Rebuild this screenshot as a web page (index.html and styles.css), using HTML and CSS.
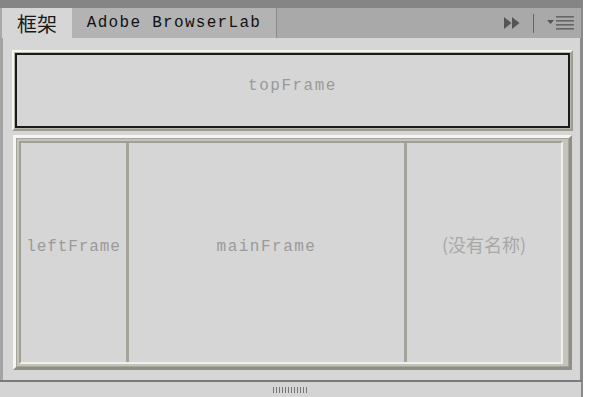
FILE: index.html
```html
<!DOCTYPE html>
<html lang="zh-CN">
  <head>
    <meta charset="UTF-8" />
    <title>框架</title>
    <link rel="stylesheet" href="styles.css">
  </head>
  <body>
    <div class="panel">
      <div class="top-strip"></div>
      <div class="tab-bar">
        <div class="tab active">框架</div>
        <div class="tab">Adobe BrowserLab</div>
        <div class="tab-tools">
          <svg class="icon" width="18" height="14" viewBox="0 0 18 14">
            <polygon points="1,1 8.5,7 1,13" fill="#555" />
            <polygon points="9,1 16.5,7 9,13" fill="#555" />
          </svg>
          <span class="tool-sep"></span>
          <svg class="icon" width="30" height="16" viewBox="0 0 30 16">
            <polygon points="1,5 8,5 4.5,9" fill="#555" />
            <rect x="10" y="1" width="18" height="1.6" fill="#666" />
            <rect x="10" y="5" width="18" height="1.6" fill="#666" />
            <rect x="10" y="9" width="18" height="1.6" fill="#666" />
            <rect x="10" y="13" width="18" height="1.6" fill="#666" />
          </svg>
        </div>
      </div>

      <div class="content">
        <div class="frame-top">
          <div class="frame-inner">topFrame</div>
        </div>
        <div class="frameset">
          <div class="frameset-inner">
            <div class="frame left">leftFrame</div>
            <div class="frame main">mainFrame</div>
            <div class="frame right cjk">(没有名称)</div>
          </div>
        </div>
      </div>

      <div class="footer">
        <span class="grip"></span>
      </div>
    </div>
  </body>
</html>
```

FILE: styles.css
```css
body {
  margin: 0;
  background: #fff;
  font-family: "Liberation Mono", "DejaVu Sans Mono", monospace;
}

.panel {
  width: 583px;
  height: 397px;
  display: flex;
  flex-direction: column;
  background: #d6d6d6;
}

.top-strip {
  height: 8px;
  background: #858585;
}

.tab-bar {
  height: 30px;
  display: flex;
  background: #a9a9a9;
  border-right: 2px solid #8a8a8a;
}
.tab {
  display: flex;
  align-items: center;
  padding: 0 12px;
  background: #b3b3b3;
  border-right: 1px solid #8c8c8c;
  color: #111;
  font-size: 16px;
  letter-spacing: 1.3px;
}
.tab.active {
  width: 70px;
  box-sizing: border-box;
  justify-content: center;
  margin-left: 2px;
  padding: 0;
  background: #d6d6d6;
  border-right: none;
  font-family: "Noto Sans CJK SC", sans-serif;
  font-size: 20px;
  letter-spacing: 0;
  color: #1a1a1a;
}
.tab + .tab {
  width: 205px;
  box-sizing: border-box;
  justify-content: center;
}
.tab-tools {
  margin-left: auto;
  display: flex;
  align-items: center;
  gap: 8px;
  padding-right: 5px;
}
.tool-sep {
  width: 1px;
  height: 19px;
  background: #666;
  margin: 0 4px;
}

.content {
  flex: 1;
  padding: 12px 7px 10px 9px;
  border-left: 3px solid #a3a3a3;
  border-right: 3px solid #8a8a8a;
  display: flex;
  flex-direction: column;
  gap: 4px;
}

.frame-top {
  height: 81px;
  box-sizing: border-box;
  border: 2px solid;
  border-color: #f6f6f0 #9c9c92 #9c9c92 #f6f6f0;
  padding: 1px;
  background: #b8b8ae;
}
.frame-inner {
  height: 100%;
  box-sizing: border-box;
  border: 2px solid #1a1a1a;
  background: #d6d6d6;
  display: flex;
  align-items: center;
  justify-content: center;
  padding-bottom: 9px;
  color: #9a9a9a;
  font-size: 16px;
  letter-spacing: 1.5px;
}

.frameset {
  flex: 1;
  box-sizing: border-box;
  border: 3px solid;
  border-color: #f6f6f0 #8f8f86 #8f8f86 #f6f6f0;
  padding: 3px 6px 3px 3px;
  background: #c4c4bc;
  box-shadow: inset 0 0 0 1px #a6a69c;
  margin-left: 1px;
  margin-right: 1px;
}
.frameset-inner {
  height: 100%;
  box-sizing: border-box;
  display: flex;
  border: 2px solid;
  border-color: #a0a096 #f0f0ea #f0f0ea #a0a096;
  background: #a4a49a;
  gap: 3px;
}
.frame {
  background: #d6d6d6;
  display: flex;
  align-items: center;
  justify-content: center;
  padding-bottom: 12px;
  color: #9a9a9a;
  font-size: 16px;
  letter-spacing: 1.5px;
}
.frame.left {
  width: 105px;
  letter-spacing: 0.9px;
}
.frame.main {
  width: 275px;
}
.frame.right {
  flex: 1;
}
.frame.cjk {
  font-family: "Noto Sans CJK SC", sans-serif;
  font-size: 18px;
  color: #a8a8a8;
  letter-spacing: 0;
  padding-bottom: 18px;
}

.footer {
  height: 15px;
  border-top: 2px solid #7a7a7a;
  background: #d4d4d4;
  border-right: 2px solid #8a8a8a;
  display: flex;
  align-items: center;
  justify-content: center;
}
.grip {
  width: 36px;
  height: 6px;
  background: repeating-linear-gradient(to right, #777 0 1px, transparent 1px 3px);
}
```
